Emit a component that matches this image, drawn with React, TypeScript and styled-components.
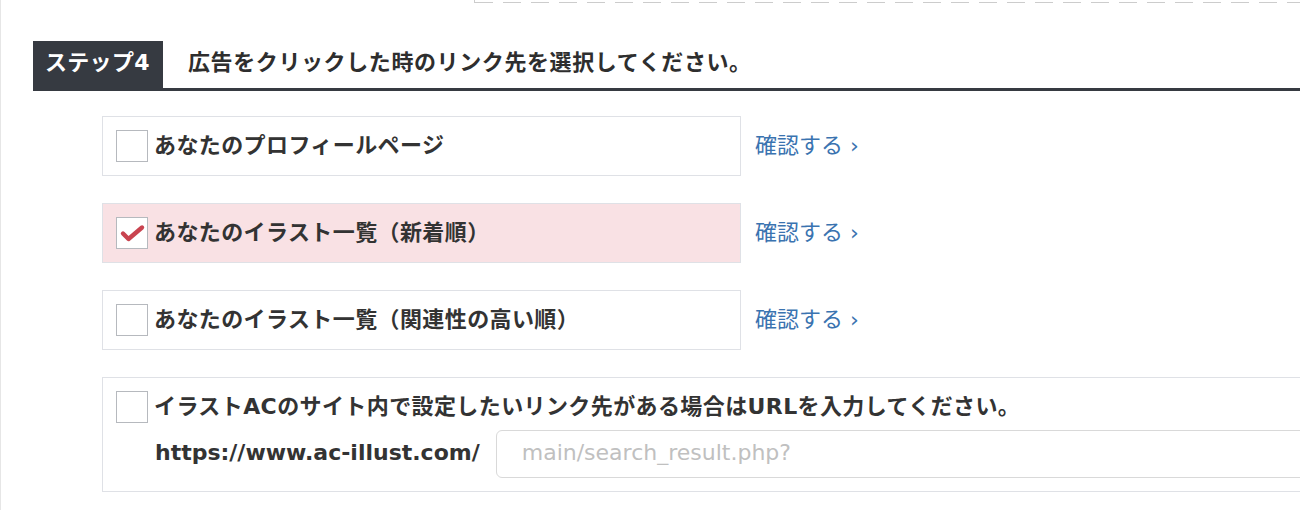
import styled, {createGlobalStyle} from "styled-components";

const GlobalStyle = createGlobalStyle`
    html, body {
        margin: 0;
        padding: 0;
        background: #ffffff;
        overflow: hidden;
    }
    body {
        font-family: "DejaVu Sans", "Noto Sans CJK JP", sans-serif;
        color: #333333;
    }
`

type Option = {
    label: string;
    checked: boolean;
};

const options: Option[] = [
    {label: "あなたのプロフィールページ", checked: false},
    {label: "あなたのイラスト一覧（新着順）", checked: true},
    {label: "あなたのイラスト一覧（関連性の高い順）", checked: false},
];

const CheckMark = () => (
    <svg width="32" height="32" viewBox="0 0 32 32">
        <path d="M7 16.5 L12.5 22 L26 10.5" fill="none" stroke="#c9434f" strokeWidth="4.4" strokeLinecap="round"
              strokeLinejoin="round"/>
    </svg>
);

const Checkbox = ({checked}: { checked: boolean }) => (
    <Box>{checked && <CheckMark/>}</Box>
);

export default function App() {
    return (
        <>
            <GlobalStyle/>
            <Page>
                <PrevPanel/>
                <Section>
                    <StepHeader>
                        <StepTab>ステップ4</StepTab>
                        <StepTitle>広告をクリックした時のリンク先を選択してください。</StepTitle>
                    </StepHeader>

                    <OptionList>
                        {options.map((o) => (
                            <OptionRow key={o.label}>
                                <OptionCard $checked={o.checked}>
                                    <Checkbox checked={o.checked}/>
                                    <Label>{o.label}</Label>
                                </OptionCard>
                                <ConfirmLink href="#">確認する ›</ConfirmLink>
                            </OptionRow>
                        ))}

                        <UrlCard>
                            <UrlHead>
                                <Checkbox checked={false}/>
                                <Label>イラストACのサイト内で設定したいリンク先がある場合はURLを入力してください。</Label>
                            </UrlHead>
                            <UrlLine>
                                <Domain>https://www.ac-illust.com/</Domain>
                                <UrlInput placeholder="main/search_result.php?"/>
                            </UrlLine>
                        </UrlCard>
                    </OptionList>
                </Section>
            </Page>
        </>
    );
}

const Page = styled.div`
    width: 1340px;
    height: 510px;
    border-left: 1px solid #e6e6e6;
    box-sizing: border-box;
`

const PrevPanel = styled.div`
    margin-left: 473px;
    height: 3px;
    border-left: 1px solid #cccccc;
    background: repeating-linear-gradient(to right, #cccccc 0 18px, transparent 18px 28px) bottom / 100% 1px no-repeat;
`

const Section = styled.div`
    margin-top: 38px;
`

const StepHeader = styled.div`
    display: flex;
    align-items: stretch;
    margin-left: 32px;
    border-bottom: 3px solid #363a41;
`

const StepTab = styled.div`
    background: #363a41;
    color: #ffffff;
    font-size: 22px;
    font-weight: 700;
    height: 47px;
    line-height: 44px;
    padding: 0 12px;
    width: 130px;
    box-sizing: border-box;
    letter-spacing: 0.3px;
`

const StepTitle = styled.div`
    font-size: 22px;
    font-weight: 700;
    line-height: 44px;
    margin-left: 25px;
    color: #2e2e2e;
    letter-spacing: 0.6px;
`

const OptionList = styled.div`
    display: flex;
    flex-direction: column;
    gap: 27px;
    padding-left: 101px;
    margin-top: 25px;
`

const OptionRow = styled.div`
    display: flex;
    align-items: center;
    gap: 14px;
`

const OptionCard = styled.label<{ $checked: boolean }>`
    display: flex;
    align-items: center;
    gap: 6px;
    width: 639px;
    height: 60px;
    padding: 0 13px;
    box-sizing: border-box;
    border: 1px solid #dfe1e6;
    background: ${({$checked}) => ($checked ? "#f9e1e4" : "#ffffff")};
`

const Box = styled.span`
    flex: none;
    width: 32px;
    height: 32px;
    box-sizing: border-box;
    border: 1px solid #b6b9be;
    background: #ffffff;
    display: flex;

    svg {
        margin: -1px;
    }
`

const Label = styled.span`
    font-size: 22px;
    font-weight: 700;
    color: #333333;
    line-height: 32px;
    white-space: nowrap;
    letter-spacing: 0.4px;
`

const ConfirmLink = styled.a`
    font-size: 22px;
    line-height: 30px;
    color: #3a73b0;
    text-decoration: none;
    white-space: nowrap;
`

const UrlCard = styled.div`
    width: 1230px;
    height: 115px;
    box-sizing: border-box;
    border: 1px solid #dfe1e6;
    padding: 13px 13px 0;
    display: flex;
    flex-direction: column;
    gap: 7px;
`

const UrlHead = styled.label`
    display: flex;
    align-items: center;
    gap: 6px;
    height: 32px;
`

const UrlLine = styled.div`
    display: flex;
    align-items: center;
    gap: 16px;
    padding-left: 39px;
`

const Domain = styled.span`
    font-size: 22px;
    font-weight: 700;
    color: #333333;
    line-height: 30px;
    padding-bottom: 2px;
    white-space: nowrap;
`

const UrlInput = styled.input`
    flex: 1;
    height: 48px;
    box-sizing: border-box;
    border: 1px solid #d9d9d9;
    border-radius: 6px;
    padding: 0 25px 3px;
    font-family: "DejaVu Sans", "Noto Sans CJK JP", sans-serif;
    font-size: 22px;
    color: #333333;
    outline: none;

    &::placeholder {
        color: #c0c0c0;
    }
`
